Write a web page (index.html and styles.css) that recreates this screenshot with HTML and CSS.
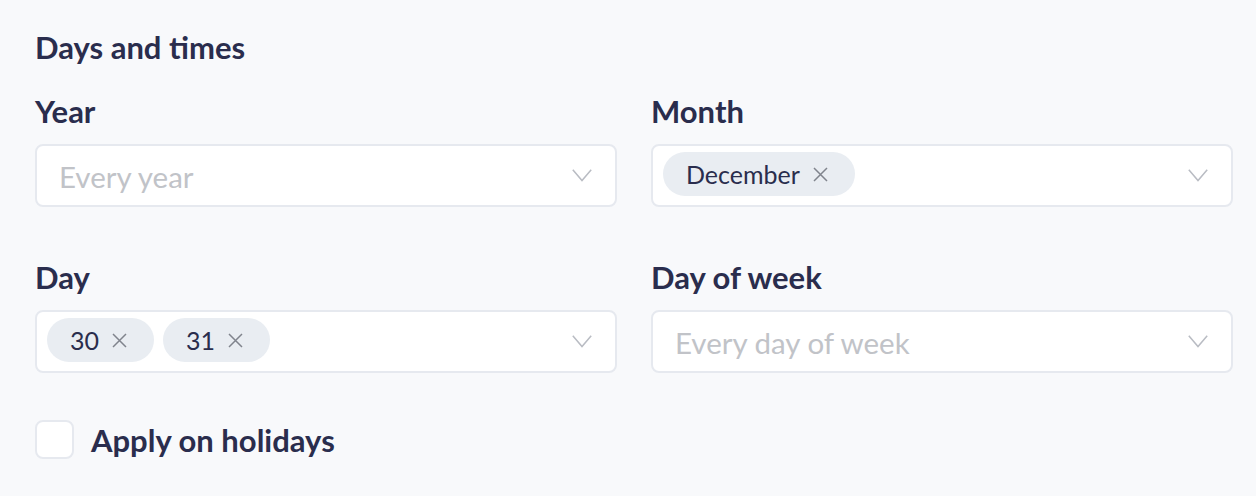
FILE: index.html
```html
<!DOCTYPE html>
<html lang="en">
<head>
    <meta charset="UTF-8">
    <meta name="viewport" content="width=device-width, initial-scale=1.0">
    <title>Days and times</title>
    <link rel="stylesheet" href="styles.css">
</head>
<body>

    <div class="panel">
        <h2 class="title">Days and times</h2>

        <div class="grid">
            <div class="field">
                <label class="label">Year</label>
                <div class="select">
                    <span class="placeholder">Every year</span>
                    <svg class="chevron" width="20" height="13" viewBox="0 0 20 13"><path d="M0.8 0.8 L10 11.6 L19.2 0.8" fill="none" stroke="#b9bcc3" stroke-width="1.5"/></svg>
                </div>
            </div>

            <div class="field">
                <label class="label">Month</label>
                <div class="select">
                    <div class="chips">
                        <span class="chip">December <svg class="x" width="15" height="15" viewBox="0 0 15 15"><path d="M1 1 L14 14 M14 1 L1 14" stroke="#80848d" stroke-width="1.5"/></svg></span>
                    </div>
                    <svg class="chevron" width="20" height="13" viewBox="0 0 20 13"><path d="M0.8 0.8 L10 11.6 L19.2 0.8" fill="none" stroke="#b9bcc3" stroke-width="1.5"/></svg>
                </div>
            </div>

            <div class="field">
                <label class="label">Day</label>
                <div class="select">
                    <div class="chips">
                        <span class="chip">30 <svg class="x" width="15" height="15" viewBox="0 0 15 15"><path d="M1 1 L14 14 M14 1 L1 14" stroke="#80848d" stroke-width="1.5"/></svg></span>
                        <span class="chip">31 <svg class="x" width="15" height="15" viewBox="0 0 15 15"><path d="M1 1 L14 14 M14 1 L1 14" stroke="#80848d" stroke-width="1.5"/></svg></span>
                    </div>
                    <svg class="chevron" width="20" height="13" viewBox="0 0 20 13"><path d="M0.8 0.8 L10 11.6 L19.2 0.8" fill="none" stroke="#b9bcc3" stroke-width="1.5"/></svg>
                </div>
            </div>

            <div class="field">
                <label class="label">Day of week</label>
                <div class="select">
                    <span class="placeholder">Every day of week</span>
                    <svg class="chevron" width="20" height="13" viewBox="0 0 20 13"><path d="M0.8 0.8 L10 11.6 L19.2 0.8" fill="none" stroke="#b9bcc3" stroke-width="1.5"/></svg>
                </div>
            </div>
        </div>

        <label class="check">
            <span class="box"></span>
            <span class="check-text">Apply on holidays</span>
        </label>
    </div>

</body>
</html>
```

FILE: styles.css
```css
body {
    font-family: Lato, 'Open Sans', sans-serif;
    margin: 0;
    background-color: #f8f9fb;
    color: #2a2d4d;
}
.panel {
    padding: 28px 23px 0 35px;
}
.title {
    font-size: 31px;
    font-weight: 700;
    line-height: 38px;
    margin: 0 0 26px 0;
}
.grid {
    display: grid;
    grid-template-columns: 1fr 1fr;
    column-gap: 34px;
    row-gap: 51px;
}
.label {
    display: block;
    font-size: 31px;
    font-weight: 700;
    line-height: 38px;
    margin-bottom: 14px;
}
.select {
    height: 63px;
    box-sizing: border-box;
    background-color: white;
    border: 2px solid #e6e9ef;
    border-radius: 8px;
    display: flex;
    align-items: center;
    justify-content: space-between;
    padding: 0 23px 0 22px;
}
.select .chips {
    margin-left: -12px;
    margin-bottom: 3px;
}
.placeholder {
    font-size: 29.5px;
    color: #c1c3c8;
    margin-top: 2px;
}
.chips {
    display: flex;
    gap: 9px;
}
.chip {
    display: flex;
    align-items: center;
    gap: 13px;
    height: 44px;
    padding: 0 27px 0 23px;
    border-radius: 22px;
    background-color: #e9edf2;
    font-size: 25px;
}
.chevron {
    display: block;
}
.check {
    display: flex;
    align-items: center;
    gap: 17px;
    margin-top: 47px;
}
.box {
    width: 39px;
    height: 39px;
    box-sizing: border-box;
    border: 2px solid #e6e9ef;
    border-radius: 8px;
    background-color: white;
}
.check-text {
    font-size: 31px;
    font-weight: 700;
}
```
